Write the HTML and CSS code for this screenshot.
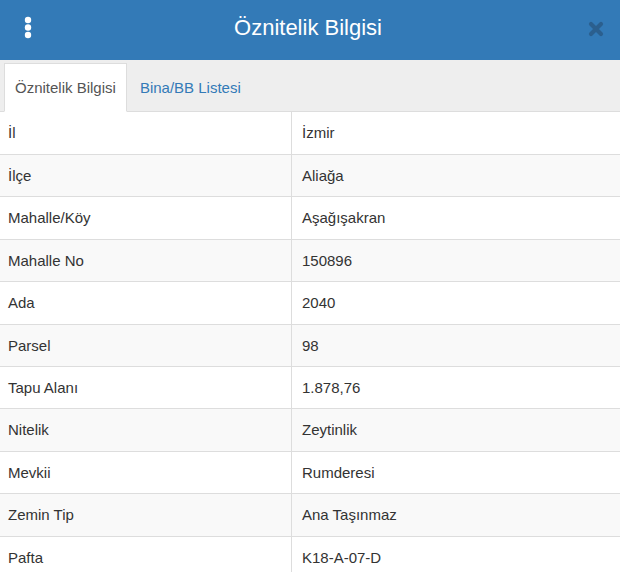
FILE: index.html
```html
<!DOCTYPE html>
<html lang="tr">
<head>
    <meta charset="UTF-8">
    <meta name="viewport" content="width=device-width, initial-scale=1.0">
    <title>Öznitelik Bilgisi</title>
    <link rel="stylesheet" href="styles.css">
</head>
<body>
    <div class="panel">
        <div class="panel-header">
            <button type="button" class="menu-button" aria-label="Menü">
                <svg width="8" height="24" viewBox="0 0 8 24">
                    <circle cx="4" cy="4" r="3.2" fill="#fff"/>
                    <circle cx="4" cy="11.5" r="3.2" fill="#fff"/>
                    <circle cx="4" cy="19" r="3.2" fill="#fff"/>
                </svg>
            </button>
            <h1 class="panel-title">Öznitelik Bilgisi</h1>
            <button type="button" class="close-button" aria-label="Kapat">
                <svg width="16" height="16" viewBox="0 0 16 16">
                    <path d="M3 3 L13 13 M13 3 L3 13" stroke="#2b5f8e" stroke-width="4.2" stroke-linecap="round"/>
                </svg>
            </button>
        </div>

        <ul class="nav-tabs">
            <li class="active"><a href="#">Öznitelik Bilgisi</a></li>
            <li><a href="#">Bina/BB Listesi</a></li>
        </ul>

        <table class="info-table">
            <tbody>
                <tr><td>İl</td><td>İzmir</td></tr>
                <tr><td>İlçe</td><td>Aliağa</td></tr>
                <tr><td>Mahalle/Köy</td><td>Aşağışakran</td></tr>
                <tr><td>Mahalle No</td><td>150896</td></tr>
                <tr><td>Ada</td><td>2040</td></tr>
                <tr><td>Parsel</td><td>98</td></tr>
                <tr><td>Tapu Alanı</td><td>1.878,76</td></tr>
                <tr><td>Nitelik</td><td>Zeytinlik</td></tr>
                <tr><td>Mevkii</td><td>Rumderesi</td></tr>
                <tr><td>Zemin Tip</td><td>Ana Taşınmaz</td></tr>
                <tr><td>Pafta</td><td>K18-A-07-D</td></tr>
            </tbody>
        </table>
    </div>
</body>
</html>
```

FILE: styles.css
```css
body {
    margin: 0;
    font-family: "Liberation Sans", Arial, sans-serif;
    font-size: 15px;
    line-height: 1.42857;
    color: #333;
    background-color: #fff;
}
.panel {
    width: 620px;
    overflow: hidden;
}
.panel-header {
    height: 60px;
    background-color: #337ab7;
    display: flex;
    align-items: center;
    justify-content: space-between;
}
.menu-button,
.close-button {
    border: none;
    background: none;
    padding: 0;
    cursor: pointer;
    display: flex;
}
.menu-button {
    margin-left: 24px;
    margin-top: -5px;
}
.close-button {
    margin-right: 16px;
    margin-top: -3px;
}
.panel-title {
    margin: 0 4px 5px 0;
    font-size: 22px;
    font-weight: normal;
    color: #fff;
}
.nav-tabs {
    list-style: none;
    margin: 0;
    padding: 3px 0 0 4px;
    display: flex;
    background-color: #eee;
    border-bottom: 1px solid #ddd;
}
.nav-tabs li {
    margin-bottom: -1px;
    margin-right: 2px;
}
.nav-tabs a {
    display: block;
    padding: 13px 10px;
    border: 1px solid transparent;
    color: #337ab7;
    text-decoration: none;
}
.nav-tabs li.active a {
    background-color: #fff;
    border-color: #ddd #ddd transparent;
    color: #555;
}
.info-table {
    width: 100%;
    border-collapse: collapse;
    table-layout: fixed;
}
.info-table td {
    padding: 10px 8px;
    border-bottom: 1px solid #ddd;
    height: 21px;
}
.info-table td:first-child {
    width: 275px;
}
.info-table td + td {
    border-left: 1px solid #ddd;
    padding-left: 10px;
}
.info-table tr:nth-child(even) td {
    background-color: #f9f9f9;
}
```
